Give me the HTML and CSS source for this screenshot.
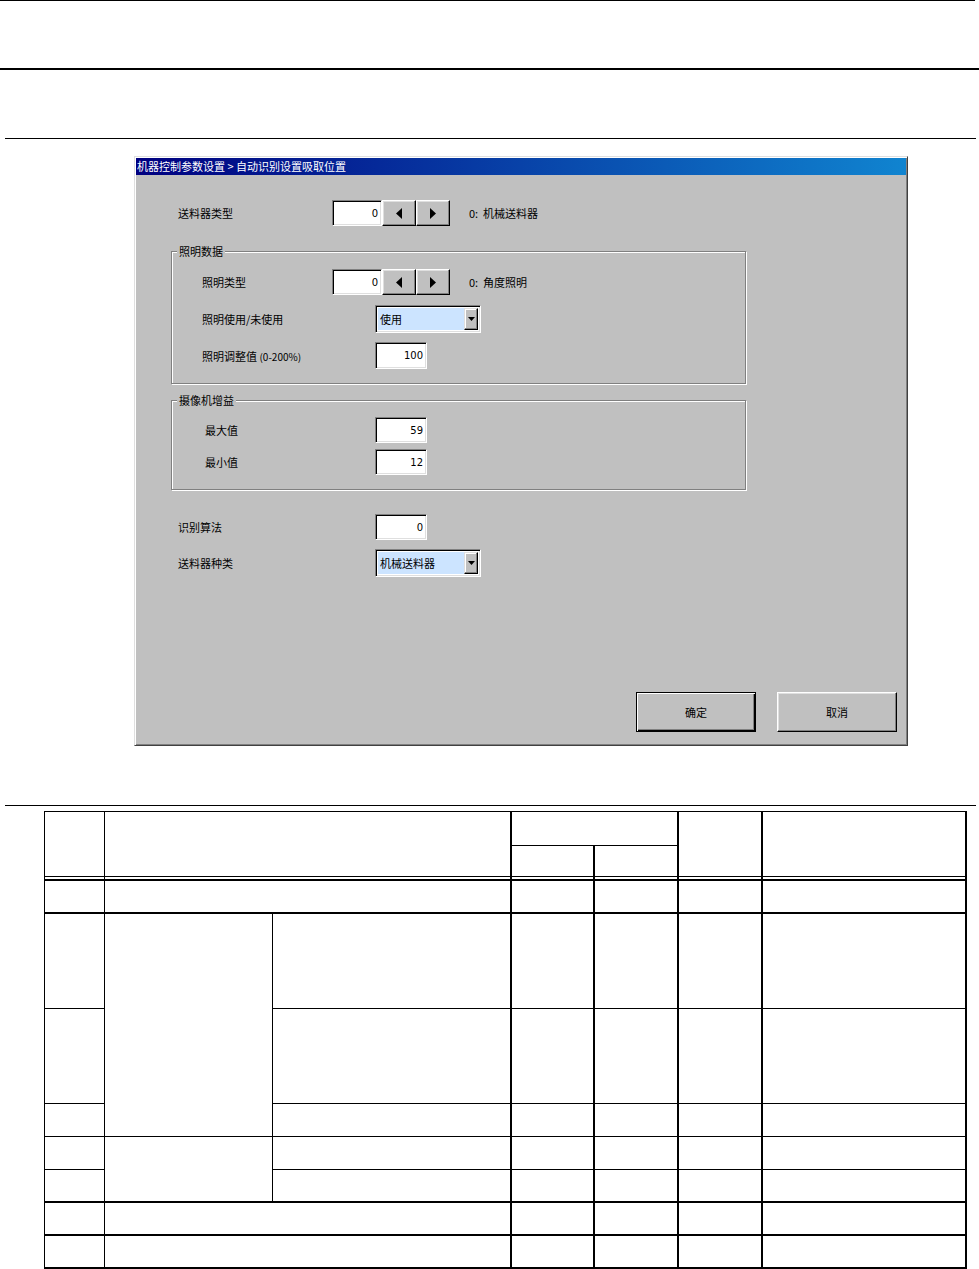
FILE: index.html
```html
<!DOCTYPE html>
<html lang="zh">
<head>
<meta charset="utf-8">
<title>自动识别设置吸取位置</title>
<link rel="stylesheet" href="styles.css">
</head>
<body>
<div class="rule rule-top"></div>
<div class="rule rule-thick"></div>
<div class="rule rule-thin r1"></div>

<div class="dialog">
  <div class="titlebar">机器控制参数设置 &gt; 自动识别设置吸取位置</div>
  <div class="dlg-body">
    <div class="row row-feeder">
      <span class="lbl w154">送料器类型</span>
      <div class="spin">
        <div class="edit spin-edit">0</div>
        <div class="spin-btn"><svg width="6" height="11" viewBox="0 0 6 11"><polygon points="6,0 6,11 0,5.5" fill="#000"/></svg></div>
        <div class="spin-btn"><svg width="6" height="11" viewBox="0 0 6 11"><polygon points="0,0 0,11 6,5.5" fill="#000"/></svg></div>
      </div>
      <span class="note">0:&nbsp;&nbsp;机械送料器</span>
    </div>

    <div class="group g-light">
      <span class="legend">照明数据</span>
      <div class="row gl-1">
        <span class="lbl w130">照明类型</span>
        <div class="spin">
          <div class="edit spin-edit">0</div>
          <div class="spin-btn"><svg width="6" height="11" viewBox="0 0 6 11"><polygon points="6,0 6,11 0,5.5" fill="#000"/></svg></div>
          <div class="spin-btn"><svg width="6" height="11" viewBox="0 0 6 11"><polygon points="0,0 0,11 6,5.5" fill="#000"/></svg></div>
        </div>
        <span class="note">0:&nbsp;&nbsp;角度照明</span>
      </div>
      <div class="row gl-2">
        <span class="lbl w173">照明使用/未使用</span>
        <div class="combo">
          <div class="combo-sel">使用</div>
          <div class="combo-btn"><svg width="7" height="4" viewBox="0 0 7 4"><polygon points="0,0 7,0 3.5,4" fill="#000"/></svg></div>
        </div>
      </div>
      <div class="row gl-3">
        <span class="lbl w173">照明调整值 <span class="small">(0-200%)</span></span>
        <div class="edit num">100</div>
      </div>
    </div>

    <div class="group g-cam">
      <span class="legend">摄像机增益</span>
      <div class="row gc-1">
        <span class="lbl w170">最大值</span>
        <div class="edit num">59</div>
      </div>
      <div class="row gc-2">
        <span class="lbl w170">最小值</span>
        <div class="edit num">12</div>
      </div>
    </div>

    <div class="row row-algo">
      <span class="lbl w197">识别算法</span>
      <div class="edit num">0</div>
    </div>
    <div class="row row-kind">
      <span class="lbl w197">送料器种类</span>
      <div class="combo">
        <div class="combo-sel">机械送料器</div>
        <div class="combo-btn"><svg width="7" height="4" viewBox="0 0 7 4"><polygon points="0,0 7,0 3.5,4" fill="#000"/></svg></div>
      </div>
    </div>

    <div class="btn-row">
      <div class="btn default">确定</div>
      <div class="btn">取消</div>
    </div>
  </div>
</div>

<div class="rule rule-thin r2"></div>

<div class="tbl">
  <!-- header row 1 -->
  <div class="c tr rs2 dbl"></div>
  <div class="c cs2 rs2 dbl"></div>
  <div class="c cs2"></div>
  <div class="c rs2 dbl"></div>
  <div class="c rs2 dbl"></div>
  <!-- header row 2 -->
  <div class="c dbl"></div>
  <div class="c dbl"></div>
  <!-- row 1 -->
  <div class="c tr thk"></div>
  <div class="c cs2 thk"></div>
  <div class="c thk"></div>
  <div class="c thk"></div>
  <div class="c thk"></div>
  <div class="c thk"></div>
  <!-- row 2 -->
  <div class="c tr"></div>
  <div class="c tr rs3"></div>
  <div class="c"></div>
  <div class="c"></div>
  <div class="c"></div>
  <div class="c"></div>
  <div class="c"></div>
  <!-- row 3 -->
  <div class="c tr"></div>
  <div class="c"></div>
  <div class="c"></div>
  <div class="c"></div>
  <div class="c"></div>
  <div class="c"></div>
  <!-- row 4 -->
  <div class="c tr"></div>
  <div class="c"></div>
  <div class="c"></div>
  <div class="c"></div>
  <div class="c"></div>
  <div class="c"></div>
  <!-- row 5 -->
  <div class="c tr"></div>
  <div class="c tr rs2 thk"></div>
  <div class="c"></div>
  <div class="c"></div>
  <div class="c"></div>
  <div class="c"></div>
  <div class="c"></div>
  <!-- row 6 -->
  <div class="c tr thk"></div>
  <div class="c thk"></div>
  <div class="c thk"></div>
  <div class="c thk"></div>
  <div class="c thk"></div>
  <div class="c thk"></div>
  <!-- row 7 -->
  <div class="c tr thk"></div>
  <div class="c cs2 thk"></div>
  <div class="c thk"></div>
  <div class="c thk"></div>
  <div class="c thk"></div>
  <div class="c thk"></div>
  <!-- row 8 -->
  <div class="c tr thk"></div>
  <div class="c cs2 thk"></div>
  <div class="c thk"></div>
  <div class="c thk"></div>
  <div class="c thk"></div>
  <div class="c thk"></div>
</div>
</body>
</html>
```

FILE: styles.css
```css
html, body {
  margin: 0;
  padding: 0;
  background: #fff;
}
body {
  font-family: "Noto Sans CJK SC", "Liberation Sans", sans-serif;
  font-size: 11px;
  color: #000;
}

/* page rules */
.rule { background: #000; }
.rule-top { height: 1px; width: 975px; }
.rule-thick { height: 2px; width: 979px; margin-top: 67px; }
.rule-thin { height: 1px; width: 971px; margin-left: 5px; }
.r1 { margin-top: 68px; }
.r2 { margin-top: 59px; }

/* dialog */
.dialog {
  box-sizing: border-box;
  width: 774px;
  height: 590px;
  margin: 17px 0 0 134px;
  background: #c0c0c0;
  border: 1px solid;
  border-color: #dfdfdf #404040 #404040 #dfdfdf;
  box-shadow: inset 1px 1px #fff, inset -1px -1px #808080;
  padding: 1px;
  display: flex;
  flex-direction: column;
}
.titlebar {
  height: 17px;
  line-height: 17px;
  padding-left: 1px;
  color: #fff;
  background: linear-gradient(to right, #000080, #1084d0);
  white-space: nowrap;
  font-size: 11px;
}
.dlg-body {
  flex: 1;
  display: flex;
  flex-direction: column;
}
.row {
  display: flex;
  align-items: center;
  flex: none;
}
.lbl { flex: none; white-space: nowrap; }
.small { font-size: 10px; }
.w130 { width: 130px; }
.w154 { width: 154px; }
.w170 { width: 170px; }
.w173 { width: 173px; }
.w197 { width: 197px; }

.row-feeder { margin-top: 25px; height: 26px; padding-left: 42px; }
.note { margin-left: 19px; white-space: nowrap; }

/* edit boxes */
.edit {
  box-sizing: border-box;
  background: #fff;
  border: 1px solid;
  border-color: #808080 #fff #fff #808080;
  box-shadow: inset 1px 1px #000, inset -1px -1px #dfdfdf;
  display: flex;
  align-items: center;
  justify-content: flex-end;
  padding-right: 3px;
  font-family: "DejaVu Sans", "Liberation Sans", sans-serif;
  font-size: 10px;
}
.num { width: 52px; height: 27px; }
.spin { display: flex; height: 26px; }
.spin-edit { width: 50px; height: 26px; }
.spin-btn {
  box-sizing: border-box;
  width: 34px;
  height: 26px;
  background: #c0c0c0;
  border: 1px solid;
  border-color: #fff #000 #000 #fff;
  box-shadow: inset -1px -1px #808080, inset 1px 1px #dfdfdf;
  display: flex;
  align-items: center;
  justify-content: center;
}
.spin-btn svg { display: block; }

/* combo */
.combo {
  box-sizing: border-box;
  width: 106px;
  height: 28px;
  border: 1px solid;
  border-color: #808080 #fff #fff #808080;
  box-shadow: inset 1px 1px #000, inset -1px -1px #dfdfdf;
  background: #fff;
  padding: 2px;
  display: flex;
}
.combo-sel {
  flex: 1;
  background: #cce4ff;
  display: flex;
  align-items: center;
  padding-left: 2px;
  white-space: nowrap;
}
.combo-btn {
  box-sizing: border-box;
  width: 14px;
  background: #c0c0c0;
  border: 1px solid;
  border-color: #dfdfdf #000 #000 #dfdfdf;
  box-shadow: inset -1px -1px #808080, inset 1px 1px #fff;
  display: flex;
  align-items: center;
  justify-content: center;
}
.combo-btn svg { display: block; }

/* group boxes */
.group {
  position: relative;
  box-sizing: border-box;
  margin-left: 35px;
  width: 575px;
  border: 1px solid #808080;
  box-shadow: inset 1px 1px #fff, 1px 1px #fff;
  flex: none;
}
.legend {
  position: absolute;
  top: -8px;
  left: 5px;
  padding: 0 2px;
  line-height: 14px;
  background: #c0c0c0;
  white-space: nowrap;
}
.g-light { margin-top: 25px; height: 133px; }
.g-light .row { padding-left: 30px; }
.gl-1 { margin-top: 17px; height: 26px; }
.gl-2 { margin-top: 10px; height: 28px; }
.gl-3 { margin-top: 9px; height: 27px; }

.g-cam { margin-top: 16px; height: 90px; }
.g-cam .row { padding-left: 33px; }
.gc-1 { margin-top: 16px; height: 26px; }
.gc-2 { margin-top: 6px; height: 26px; }
.g-cam .num { height: 26px; }

.row-algo { margin-top: 24px; height: 26px; padding-left: 42px; }
.row-algo .num { height: 26px; }
.row-kind { margin-top: 9px; height: 28px; padding-left: 42px; }

/* buttons */
.btn-row {
  margin-top: auto;
  margin-bottom: 12px;
  padding-right: 9px;
  display: flex;
  justify-content: flex-end;
  gap: 21px;
}
.btn {
  box-sizing: border-box;
  width: 120px;
  height: 40px;
  background: #c0c0c0;
  border: 1px solid;
  border-color: #fff #000 #000 #fff;
  box-shadow: inset -1px -1px #808080, inset 1px 1px #dfdfdf;
  display: flex;
  align-items: center;
  justify-content: center;
}
.btn.default {
  border-color: #000;
  box-shadow: inset 1px 1px #fff, inset -1px -1px #000, inset -2px -2px #808080;
}

/* table */
.tbl {
  box-sizing: border-box;
  width: 923px;
  margin: 5px 0 0 44px;
  display: grid;
  grid-template-columns: 60px 168px 239px 83px 84px 84px 204px;
  grid-template-rows: 34px 35px 33px 95px 95px 33px 33px 33px 33px 33px;
  border-top: 1px solid #000;
  border-left: 1px solid #000;
  background: #fff;
}
.c {
  box-sizing: border-box;
  border-right: 2px solid #000;
  border-bottom: 1px solid #000;
}
.c.tr { border-right-width: 1px; }
.c.thk { border-bottom-width: 2px; }
.c.dbl {
  border-bottom: 0;
  background: linear-gradient(to top, #000 0 2px, #fff 2px 4px, #000 4px 5px, #fff 5px);
  background-origin: border-box;
}
.cs2 { grid-column: span 2; }
.rs2 { grid-row: span 2; }
.rs3 { grid-row: span 3; }
```
